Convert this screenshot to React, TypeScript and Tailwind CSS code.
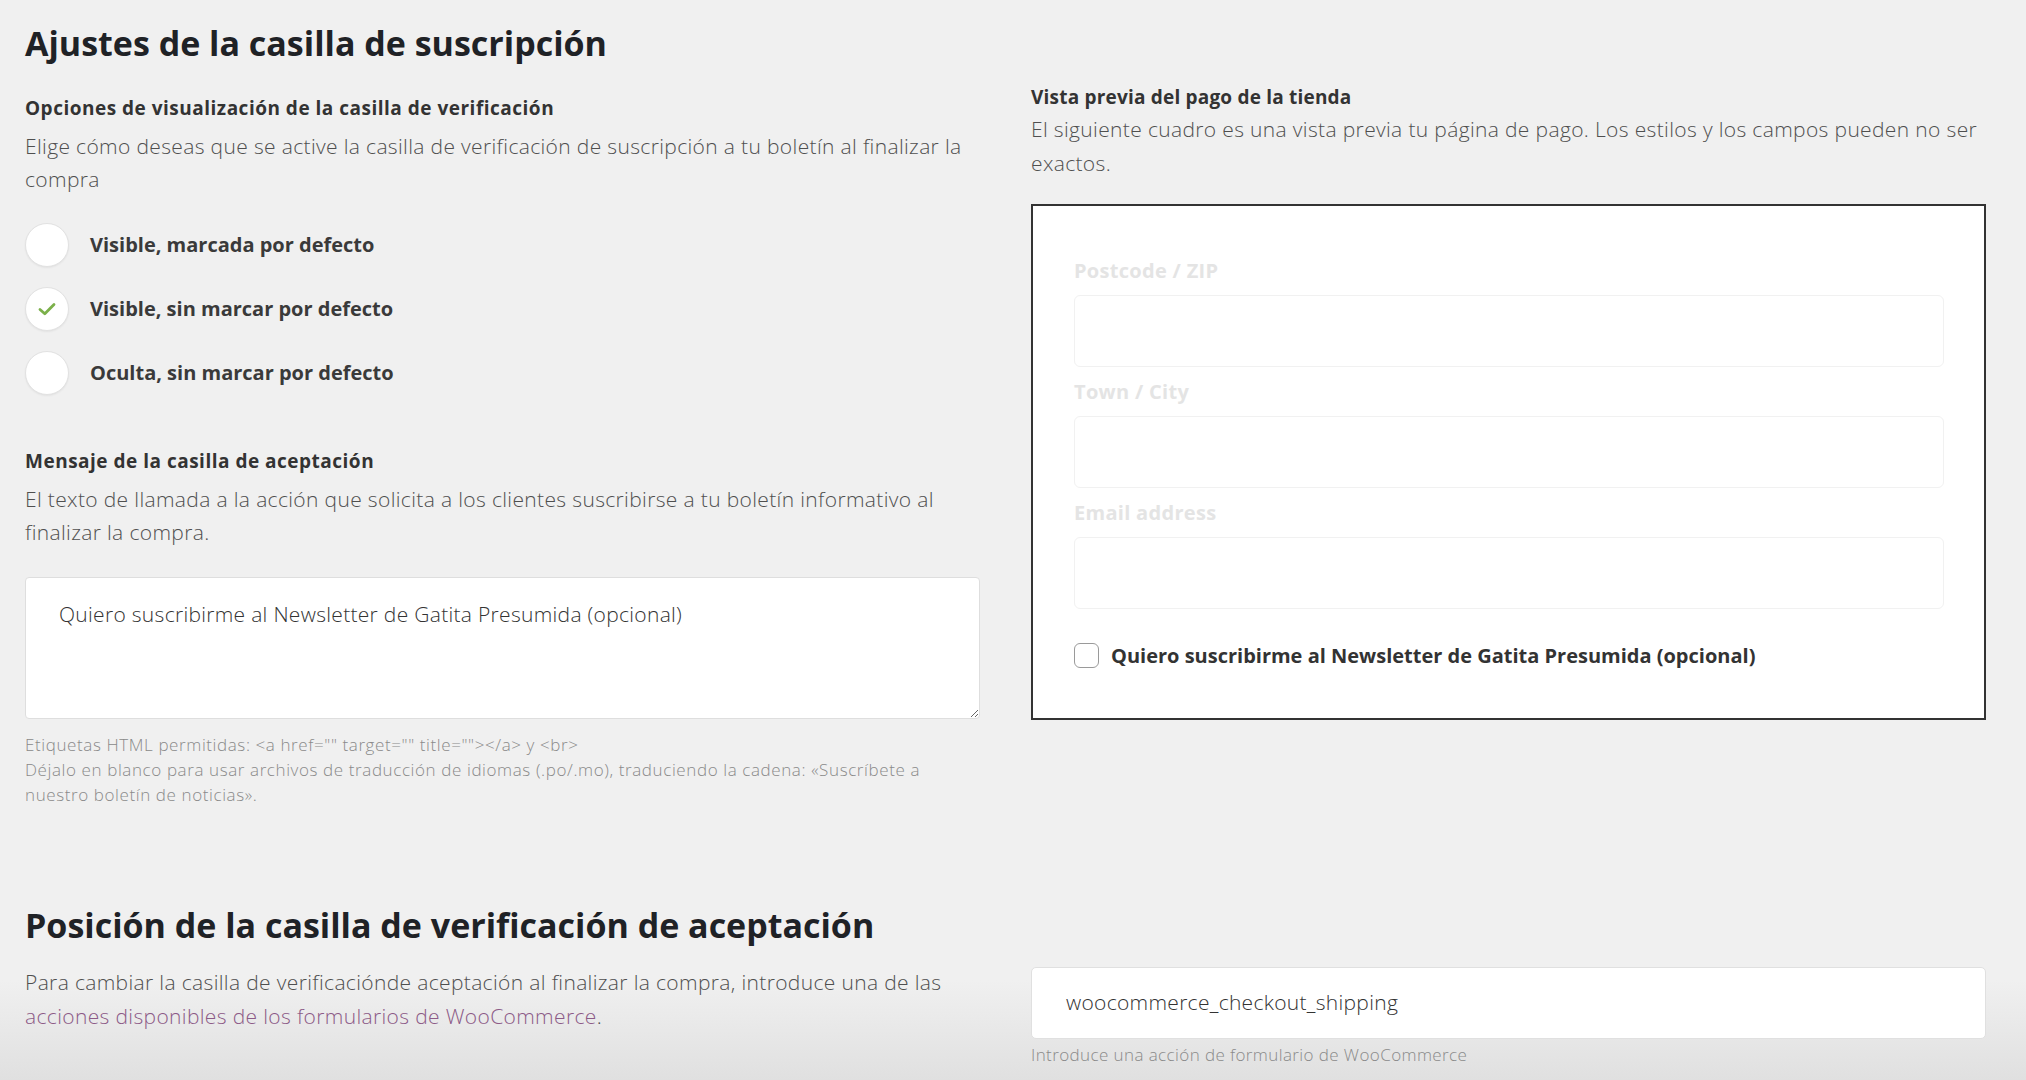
import React from 'react';

// --- helpers ---

const RadioOption: React.FC<{ label: string; checked?: boolean }> = ({ label, checked }) => (
    <div className="flex items-center">
        <div className="w-[44px] h-[44px] rounded-full bg-white border border-[#e2e2e2] shadow-[0_1px_2px_rgba(0,0,0,0.06)] flex items-center justify-center shrink-0">
            {checked && (
                <svg width="18" height="14" viewBox="0 0 18 14" fill="none">
                    <path d="M2 7.5 L6.8 11.8 L16 2.5" stroke="#7bb04a" strokeWidth="2.8" strokeLinecap="round" strokeLinejoin="round" />
                </svg>
            )}
        </div>
        <span className="ml-[21px] text-[20px] font-bold text-[#3a3a3a] leading-[24px]">{label}</span>
    </div>
);

const PreviewField: React.FC<{ label: string; first?: boolean }> = ({ label, first }) => (
    <div className={first ? '' : 'mt-[13px]'}>
        <div className="text-[20px] font-bold text-[#e4e4e4] leading-[24px] tracking-[0.3px]">{label}</div>
        <div className="mt-[12px] h-[72px] rounded-[6px] border border-[#f1f1f1] bg-white"></div>
    </div>
);

export default function App() {
    return (
        <div
            className="w-full h-[1080px] overflow-hidden bg-[linear-gradient(to_bottom,#f0f0f0_0px,#f0f0f0_980px,#e0e0e0_1080px)] pl-[25px] pr-[40px] pt-[23px]"
            style={{ fontFamily: '"Open Sans", Lato, Arial, sans-serif' }}
        >
            {/* Section 1 title */}
            <h1 className="text-[34px] font-bold leading-[40px] text-[#1f2226]">Ajustes de la casilla de suscripción</h1>

            <div className="grid grid-cols-2 gap-x-[51px]">
                {/* Left column */}
                <div className="mt-[33px]">
                    <h3 className="text-[19px] font-bold leading-[24px] text-[#333] tracking-[0.5px]">Opciones de visualización de la casilla de verificación</h3>
                    <p className="mt-[10px] text-[21px] font-light leading-[33px] text-[#4f4f4f] tracking-[0.35px]">
                        Elige cómo deseas que se active la casilla de verificación de suscripción a tu boletín al finalizar la compra
                    </p>
                    <div className="mt-[27px] flex flex-col gap-[20px]">
                        <RadioOption label="Visible, marcada por defecto" />
                        <RadioOption label="Visible, sin marcar por defecto" checked />
                        <RadioOption label="Oculta, sin marcar por defecto" />
                    </div>

                    <h3 className="mt-[54px] text-[19px] font-bold leading-[24px] text-[#333] tracking-[0.5px]">Mensaje de la casilla de aceptación</h3>
                    <p className="mt-[10px] text-[21px] font-light leading-[33px] text-[#4f4f4f] tracking-[0.35px]">
                        El texto de llamada a la acción que solicita a los clientes suscribirse a tu boletín informativo al finalizar la compra.
                    </p>
                    <textarea
                        readOnly
                        defaultValue="Quiero suscribirme al Newsletter de Gatita Presumida (opcional)"
                        className="mt-[28px] block w-full h-[142px] rounded-[4px] border border-[#dedede] bg-white px-[33px] pt-[22px] text-[21px] font-light leading-[28px] text-[#333] tracking-[0.3px] outline-none resize-y"
                    />
                    <p className="mt-[13px] text-[17px] font-light leading-[25px] text-[#8a8a8a] tracking-[0.6px]">
                        Etiquetas HTML permitidas: &lt;a href="" target="" title=""&gt;&lt;/a&gt; y &lt;br&gt;
                        <br />
                        Déjalo en blanco para usar archivos de traducción de idiomas (.po/.mo), traduciendo la cadena: «Suscríbete a nuestro boletín de noticias».
                    </p>
                </div>

                {/* Right column */}
                <div className="mt-[22px]">
                    <h3 className="text-[19px] font-bold leading-[24px] text-[#333] tracking-[0.2px]">Vista previa del pago de la tienda</h3>
                    <p className="mt-[3px] text-[21px] font-light leading-[34px] text-[#4f4f4f] tracking-[0.35px]">
                        El siguiente cuadro es una vista previa tu página de pago. Los estilos y los campos pueden no ser exactos.
                    </p>
                    <div className="mt-[24px] h-[516px] border-2 border-[#333] bg-white pl-[41px] pr-[40px] pt-[53px]">
                        <PreviewField label="Postcode / ZIP" first />
                        <PreviewField label="Town / City" />
                        <PreviewField label="Email address" />
                        <div className="mt-[34px] flex items-center">
                            <div className="w-[25px] h-[25px] rounded-[6px] border border-[#9a9a9a] bg-white shrink-0"></div>
                            <span className="ml-[12px] text-[20px] font-bold leading-[24px] text-[#333]">
                                Quiero suscribirme al Newsletter de Gatita Presumida (opcional)
                            </span>
                        </div>
                    </div>
                </div>
            </div>

            {/* Section 2 */}
            <h1 className="mt-[98px] text-[34px] font-bold leading-[40px] text-[#1f2226]">Posición de la casilla de verificación de aceptación</h1>

            <div className="mt-[20px] grid grid-cols-2 gap-x-[51px]">
                <p className="text-[21px] font-light leading-[34px] text-[#4f4f4f] tracking-[0.35px]">
                    Para cambiar la casilla de verificaciónde aceptación al finalizar la compra, introduce una de las{' '}
                    <a className="text-[#8c5a87]">acciones disponibles de los formularios de WooCommerce</a>.
                </p>
                <div className="mt-[2px]">
                    <div className="h-[72px] rounded-[5px] border border-[#e0e0e0] bg-white flex items-center px-[34px]">
                        <span className="text-[21px] font-light text-[#333] tracking-[0.3px]">woocommerce_checkout_shipping</span>
                    </div>
                    <p className="mt-[5px] text-[17px] font-light leading-[22px] text-[#8a8a8a] tracking-[0.4px]">Introduce una acción de formulario de WooCommerce</p>
                </div>
            </div>
        </div>
    );
}
